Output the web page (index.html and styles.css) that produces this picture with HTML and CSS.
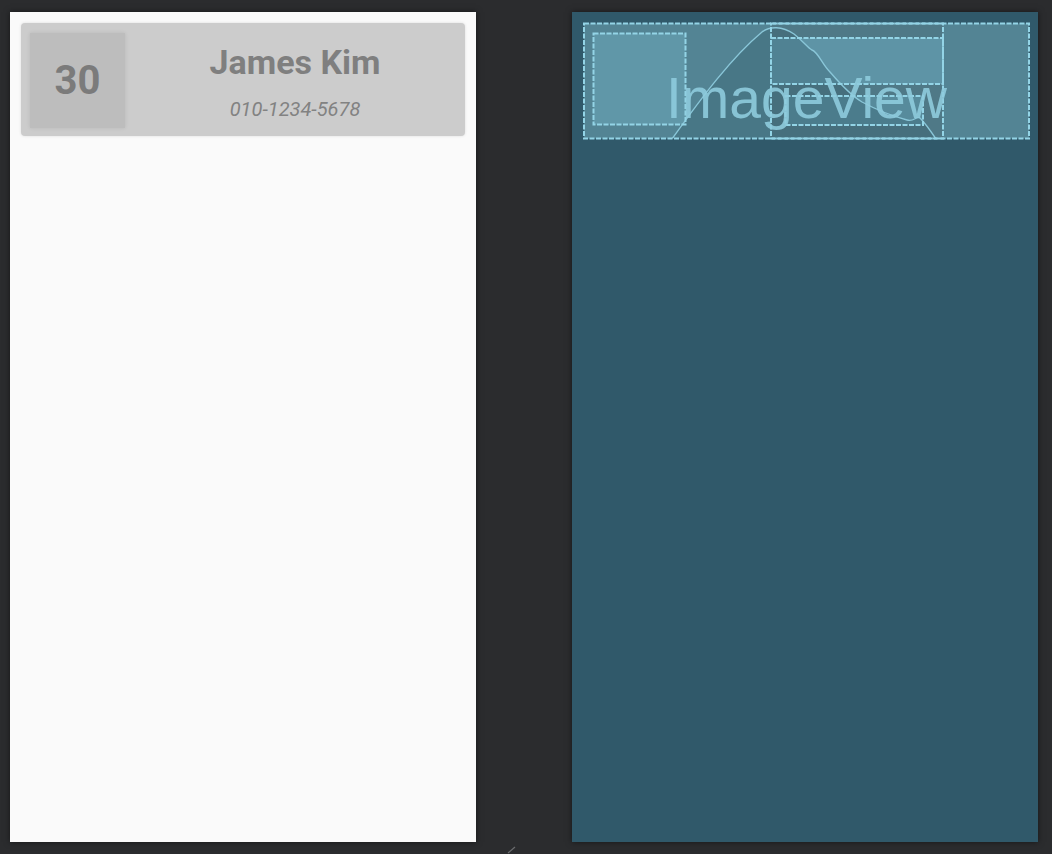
FILE: index.html
```html
<!DOCTYPE html>
<html lang="en">
<head>
  <meta charset="UTF-8">
  <title>Layout Preview</title>
  <link rel="stylesheet" href="styles.css">
</head>
<body>
  <div class="stage">
    <div class="screen design">
      <div class="card">
        <div class="avatar">30</div>
        <div class="info">
          <div class="name">James Kim</div>
          <div class="phone">010-1234-5678</div>
        </div>
      </div>
    </div>

    <div class="screen blueprint">
      <svg class="bp" width="466" height="140" viewBox="0 0 466 140">
        <defs>
          <clipPath id="outer"><rect x="12" y="11.5" width="445" height="115"/></clipPath>
        </defs>
        <!-- item container -->
        <rect x="12" y="11.5" width="445" height="115" fill="#538494"/>
        <!-- avatar -->
        <rect x="21.5" y="21.5" width="92" height="91" fill="#6097a8"/>
        <!-- text column -->
        <rect x="199" y="11.5" width="172" height="115" fill="#4f7987"/>
        <rect x="199" y="26" width="172" height="46" fill="#5e94a6"/>
        <rect x="213.5" y="84" width="137.5" height="29" fill="#578b9c"/>
        <!-- image placeholder mountain -->
        <path clip-path="url(#outer)" fill="#2e5566" fill-opacity="0.28"
          d="M100 127 C130 85 160 45 190 20 C198 14 210 14 222 22 C232 30 236 36 240 38 C246 40 250 52 258 60 C270 74 280 84 290 90 C305 98 320 104 335 108 C342 110 344 104 348 106 C352 110 358 118 364 127 Z"/>
        <path clip-path="url(#outer)" fill="none" stroke="#89c6d8" stroke-width="1.4"
          d="M100 127 C130 85 160 45 190 20 C198 14 210 14 222 22 C232 30 236 36 240 38 C246 40 250 52 258 60 C270 74 280 84 290 90 C305 98 320 104 335 108 C342 110 344 104 348 106 C352 110 358 118 364 127"/>
        <g fill="none" stroke="#93d4e6" stroke-width="2" stroke-dasharray="5 1.5">
          <rect x="12" y="11.5" width="445" height="115"/>
          <rect x="21.5" y="21.5" width="92" height="91"/>
          <rect x="199" y="11.5" width="172" height="115"/>
          <rect x="199" y="26" width="172" height="46"/>
          <rect x="213.5" y="84" width="137.5" height="29"/>
        </g>
        <text class="bp-label" x="94" y="106">ImageView</text>
      </svg>
    </div>
  </div>

  <svg class="grip" width="12" height="8" viewBox="0 0 12 8">
    <path d="M2 7 L9 1" stroke="#6b6c6e" stroke-width="1.2"/>
  </svg>
</body>
</html>
```

FILE: styles.css
```css
html, body { margin: 0; height: 100%; }
body { background: #2b2c2e; font-family: Roboto, "Liberation Sans", sans-serif; overflow: hidden; }

.stage { display: flex; gap: 96px; padding: 12px 0 0 10px; }
.screen { width: 466px; height: 830px; box-shadow: 0 0 6px rgba(0, 0, 0, 0.5); }

.design { background: #fafafa; padding: 11px; box-sizing: border-box; }
.blueprint { background: #30596a; }

.card { display: flex; height: 113px; background: #cccccc; border-radius: 4px; box-shadow: 0 0 3px rgba(0, 0, 0, 0.12); }
.avatar { width: 95px; height: 95px; margin: 10px 0 0 9px; background: #bdbdbd; box-shadow: 0 0 4px rgba(0, 0, 0, 0.1);
  display: flex; align-items: center; justify-content: center; font-weight: 700; font-size: 40px; color: #7b7b7b; }
.info { flex: 1; display: flex; flex-direction: column; align-items: center; padding-top: 17px; }
.name { font-size: 34px; font-weight: 700; color: #7f7f7f; line-height: 44px; }
.phone { font-size: 20px; font-style: italic; color: #828282; line-height: 26px; margin-top: 12px; }

.bp { display: block; }
.bp-label { font-family: "Liberation Sans", Arial, sans-serif; font-size: 57px; fill: #8ecbdd; fill-opacity: 0.9; }

.grip { position: absolute; left: 506px; top: 846px; }
```
